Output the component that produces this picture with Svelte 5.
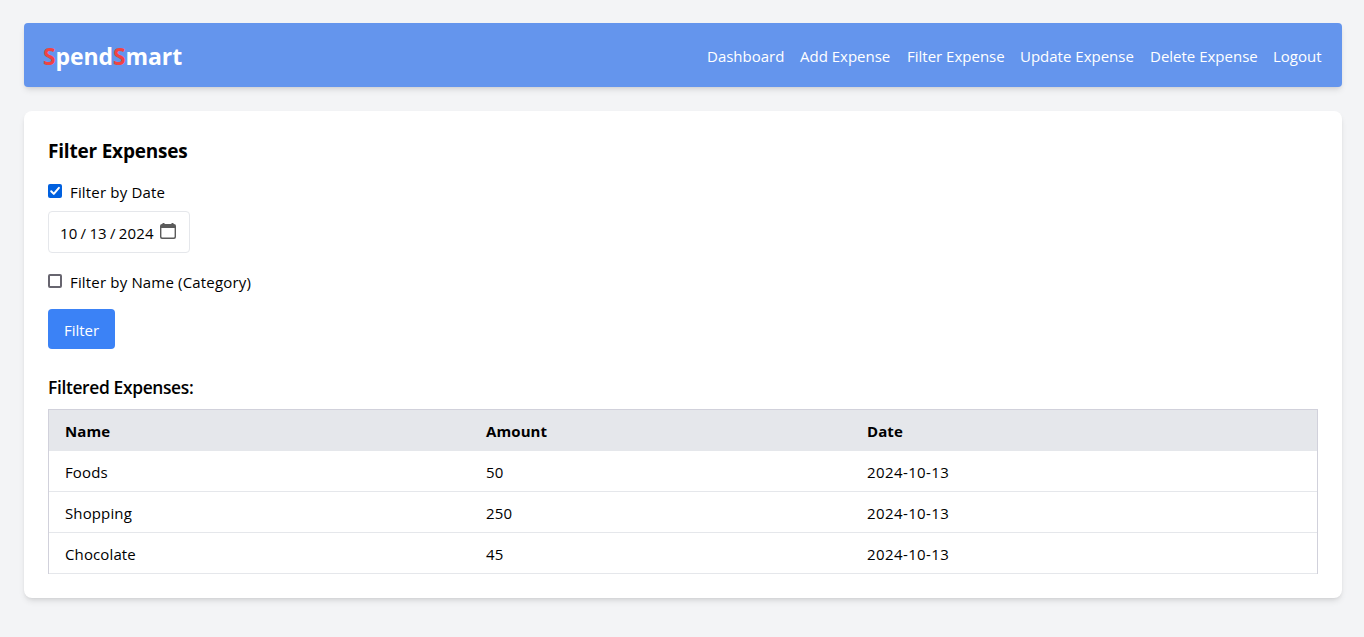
<script>
  const links = [
    ['Dashboard', 77],
    ['Add Expense', 91],
    ['Filter Expense', 97],
    ['Update Expense', 114],
    ['Delete Expense', 107],
    ['Logout', 50]
  ];
  const expenses = [
    { name: 'Foods', amount: 50, date: '2024-10-13' },
    { name: 'Shopping', amount: 250, date: '2024-10-13' },
    { name: 'Chocolate', amount: 45, date: '2024-10-13' }
  ];
</script>

<div class="page">
  <nav>
    <div class="brand"><span>S</span>pend<span>S</span>mart</div>
    <ul>
      {#each links as [label, width]}
        <li style="width: {width}px">{label}</li>
      {/each}
    </ul>
  </nav>

  <main>
    <h2>Filter Expenses</h2>
    <div class="option">
      <svg width="14" height="14" viewBox="0 0 14 14">
        <rect width="14" height="14" rx="2" fill="#0060df" />
        <path d="M3.2 7.2 5.8 9.9 10.9 3.8" fill="none" stroke="#fff" stroke-width="2" stroke-linecap="round" stroke-linejoin="round" />
      </svg>
      <span class="label">Filter by Date</span>
    </div>
    <div class="date">
      <span>10</span><i>/</i><span>13</span><i>/</i><span>2024</span>
      <svg width="16" height="16" viewBox="0 0 16 16">
        <path fill="#5b5b5b" fill-rule="evenodd" d="M2.5 0h2v1h7V0h2v1h.5a2 2 0 0 1 2 2v11a2 2 0 0 1-2 2H2a2 2 0 0 1-2-2V3a2 2 0 0 1 2-2h.5zM1.4 5v8.6a1 1 0 0 0 1 1h11.2a1 1 0 0 0 1-1V5z" />
      </svg>
    </div>
    <div class="option second">
      <svg width="14" height="14" viewBox="0 0 14 14">
        <rect x="1" y="1" width="12" height="12" rx="1" fill="#fff" stroke="#67656f" stroke-width="2" />
      </svg>
      <span class="label">Filter by Name (Category)</span>
    </div>
    <button>Filter</button>
    <h3>Filtered Expenses:</h3>
    <div class="table">
      <div class="row head"><b>Name</b><b>Amount</b><b>Date</b></div>
      {#each expenses as e}
        <div class="row"><span>{e.name}</span><span>{e.amount}</span><span class="day">{e.date}</span></div>
      {/each}
    </div>
  </main>
</div>

<style>
  :global(body) {
    margin: 0;
    background: #f3f4f6;
  }
  * {
    box-sizing: border-box;
  }
  .page {
    min-height: 637px;
    padding: 23px 22px 0 24px;
    font: 15px/24px 'Open Sans', 'Noto Sans', sans-serif;
    letter-spacing: 0.12px;
    color: #000;
    white-space: nowrap;
  }
  nav,
  main {
    box-shadow: 0 4px 6px -1px rgba(0, 0, 0, 0.1), 0 2px 4px -2px rgba(0, 0, 0, 0.1);
  }
  nav {
    display: flex;
    align-items: center;
    justify-content: space-between;
    height: 64px;
    padding: 2px 19px 0;
    border-radius: 4px;
    background: #6495ed;
    color: #fff;
  }
  .brand {
    font-size: 23px;
    line-height: 32px;
    font-weight: 700;
    letter-spacing: -0.1px;
  }
  .brand span {
    color: #ef4444;
  }
  ul {
    display: flex;
    gap: 16px;
    margin: 0;
    padding: 0;
    list-style: none;
    letter-spacing: 0;
  }
  main {
    height: 487px;
    margin-top: 24px;
    padding: 26px 24px 24px;
    border-radius: 8px;
    background: #fff;
  }
  h2,
  h3 {
    margin: 0;
    line-height: 28px;
  }
  h2 {
    font-size: 19px;
    font-weight: 700;
    letter-spacing: -0.2px;
  }
  h3 {
    margin-top: 24px;
    font-size: 17.4px;
    font-weight: 600;
    letter-spacing: -0.35px;
  }
  .option {
    display: flex;
    align-items: center;
    gap: 8px;
    height: 24px;
    margin-top: 16px;
  }
  .option svg {
    margin-top: -4px;
  }
  .label {
    margin-top: -2px;
    letter-spacing: 0.17px;
  }
  .date {
    display: flex;
    align-items: center;
    width: 142px;
    height: 42px;
    margin-top: 6px;
    padding: 2px 0 0 11px;
    border: 1px solid #e5e7eb;
    border-radius: 4px;
  }
  .date i {
    width: 12px;
    font-style: normal;
    text-align: center;
  }
  .date svg {
    margin: -4px 0 0 6px;
  }
  .option.second {
    margin-top: 18px;
  }
  button {
    display: block;
    width: 67px;
    height: 40px;
    margin-top: 14px;
    padding: 2px 0 0;
    border: 0;
    border-radius: 4px;
    background: #3b82f6;
    color: #fff;
    font: inherit;
  }
  .table {
    margin-top: 8px;
    border: solid #d1d1db;
    border-width: 1px 1px 0;
  }
  .row {
    display: grid;
    grid-template-columns: 421px 381px 1fr;
    height: 41px;
    padding: 9px 16px 0;
    border-bottom: 1px solid #e5e7eb;
  }
  .head {
    background: #e5e7eb;
    letter-spacing: 0.1px;
  }
  .day {
    letter-spacing: 0.4px;
  }
</style>
